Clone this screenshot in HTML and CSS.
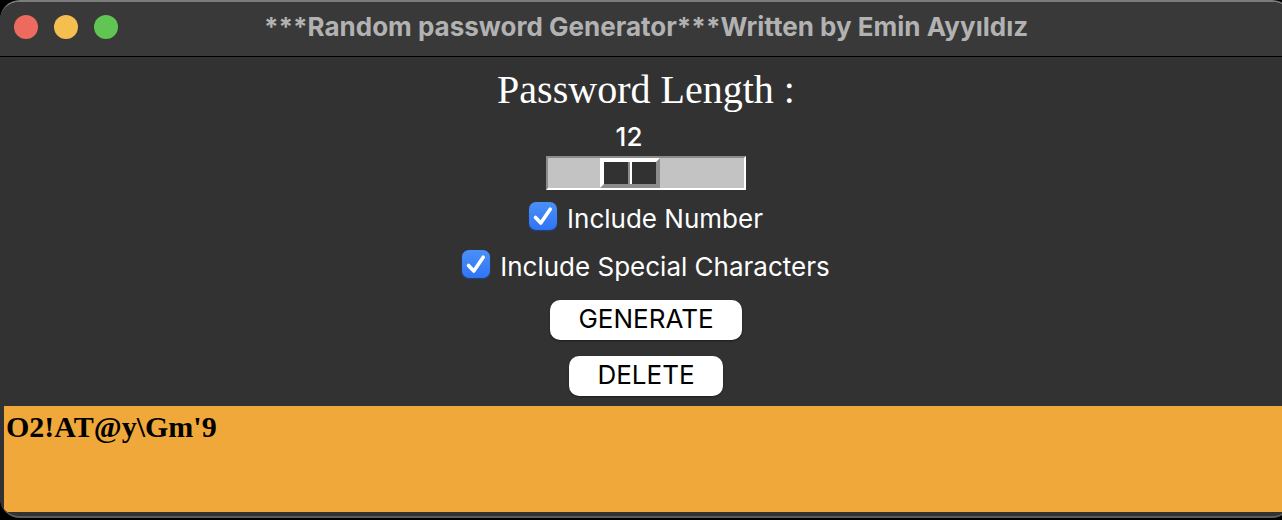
FILE: index.html
```html
<!DOCTYPE html>
<html lang="en">
<head>
<meta charset="utf-8">
<title>Random password Generator</title>
<link rel="stylesheet" href="styles.css">
</head>
<body>
<div class="window">
  <header class="titlebar">
    <div class="lights">
      <button class="light close" type="button" aria-label="Close"></button>
      <button class="light minimize" type="button" aria-label="Minimize"></button>
      <button class="light expand" type="button" aria-label="Zoom"></button>
    </div>
    <h1 class="title">***Random password Generator***Written by Emin Ayyıldız</h1>
  </header>
  <main class="content">
    <label class="heading" for="length">Password Length :</label>
    <div class="scale">
      <output class="value" for="length">12</output>
      <input class="slider" id="length" type="range" min="4" max="25" value="12">
    </div>
    <label class="option"><input class="check" type="checkbox" checked><span>Include Number</span></label>
    <label class="option"><input class="check" type="checkbox" checked><span>Include Special Characters</span></label>
    <button class="action" type="button">GENERATE</button>
    <button class="action" type="button">DELETE</button>
    <textarea class="result" aria-label="Generated password" spellcheck="false">O2!AT@y\Gm'9</textarea>
  </main>
</div>
</body>
</html>
```
FILE: styles.css
```css
* {
  box-sizing: border-box;
}

html {
  height: 100%;
  overflow: hidden;
}

body {
  margin: 0;
  height: 100%;
  padding-bottom: 2px;
  background: #000;
  font-family: Inter, "Liberation Sans", sans-serif;
  color: #fff;
}

/* The window runs slightly past the right edge of the screen. */
.window {
  display: flex;
  flex-direction: column;
  height: 100%;
  margin-right: -10px;
  overflow: hidden;
  background: #323232;
  border-top: 2px solid #7b7c7c;
  border-bottom: 2px solid #5c5c5c;
  border-radius: 20px;
}

.titlebar {
  display: grid;
  grid-template-columns: 1fr auto 1fr;
  align-items: center;
  height: 55px;
  padding: 0 14px 4px;
  background: #393939;
  border-bottom: 1px solid #000;
}

.lights {
  display: flex;
  gap: 16px;
}

.light {
  width: 24px;
  height: 24px;
  padding: 0;
  border: 0;
  border-radius: 50%;
}

.close {
  background: #ed6a5e;
}

.minimize {
  background: #f5bf4f;
}

.expand {
  background: #61c554;
}

.title {
  margin: 0;
  font-size: 26px;
  font-weight: 700;
  line-height: 32px;
  color: #b2b2b2;
  white-space: nowrap;
}

.content {
  flex: 1;
  display: flex;
  flex-direction: column;
  align-items: center;
  padding: 9px 4px 4px;
}

.heading {
  font-family: "Liberation Serif", serif;
  font-size: 40px;
  line-height: 48px;
}

.scale {
  display: flex;
  flex-direction: column;
  gap: 3px;
  width: 200px;
  margin: 7px 0 12px;
}

.value {
  padding-right: 34px;
  font-size: 26px;
  font-weight: 500;
  line-height: 32px;
  text-align: center;
}

.slider {
  appearance: none;
  width: 100%;
  height: 34px;
  margin: 0;
  background: #c3c3c3;
  border: 2px solid;
  border-color: #8c8c8c #fff #fff #8c8c8c;
}

.slider::-webkit-slider-thumb {
  appearance: none;
  box-sizing: border-box;
  width: 60px;
  height: 30px;
  background: linear-gradient(90deg, #323232 24px, #8c8c8c 24px 26px, #fff 26px 28px, #323232 28px);
  border: 4px solid;
  border-color: #fff #8c8c8c #8c8c8c #fff;
}

.option {
  display: flex;
  gap: 10px;
  height: 28px;
  margin-bottom: 20px;
  font-size: 26px;
  line-height: 34px;
}

.check {
  appearance: none;
  width: 28px;
  height: 28px;
  margin: 0;
  border-radius: 7px;
  background: url("data:image/svg+xml,%3Csvg xmlns='http://www.w3.org/2000/svg' viewBox='0 0 28 28'%3E%3Cpath d='M6.5 15.5 11.8 21 21.2 7.2' fill='none' stroke='white' stroke-width='3.6' stroke-linecap='round' stroke-linejoin='round'/%3E%3C/svg%3E"), linear-gradient(#4a90f7, #3074f6);
  box-shadow: 0 1px 2px #1d4484;
}

.action {
  height: 40px;
  margin: 2px 0 14px;
  padding: 0 28px 2px;
  border: 0;
  border-radius: 10px;
  background: #fff;
  box-shadow: 0 1px 2px #1c1c1c;
  color: #000;
  font-family: inherit;
  font-size: 26px;
  line-height: 38px;
}

.result {
  flex: 1;
  align-self: stretch;
  margin-top: -4px;
  padding: 4px 2px;
  border: 0;
  outline: 0;
  resize: none;
  background: #f0a83b;
  color: #000;
  font-family: "Liberation Serif", serif;
  font-size: 30px;
  font-weight: 700;
  line-height: 34px;
}
```
